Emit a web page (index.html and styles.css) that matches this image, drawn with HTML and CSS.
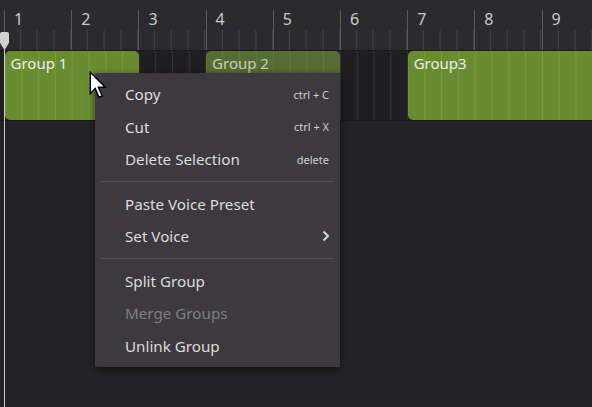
FILE: index.html
```html
<!DOCTYPE html>
<html lang="en">
<head>
  <meta charset="UTF-8" />
  <title>Arrangement - Context Menu</title>
  <link rel="stylesheet" href="styles.css">
</head>
<body>
  <div class="editor">
    <!-- bar ruler -->
    <div class="ruler">
      <div class="bar"><span>1</span></div>
      <div class="bar"><span>2</span></div>
      <div class="bar"><span>3</span></div>
      <div class="bar"><span>4</span></div>
      <div class="bar"><span>5</span></div>
      <div class="bar"><span>6</span></div>
      <div class="bar"><span>7</span></div>
      <div class="bar"><span>8</span></div>
      <div class="bar"><span>9</span></div>
    </div>

    <!-- track lane, one grid column per beat -->
    <div class="lane">
      <div class="group group-1">Group 1</div>
      <div class="group group-2 dim">Group 2</div>
      <div class="group group-3">Group3</div>
    </div>

    <div class="playhead">
      <div class="playhead-pin"></div>
    </div>

    <div class="context-menu">
      <div class="menu-item"><span>Copy</span><span class="shortcut">ctrl + C</span></div>
      <div class="menu-item"><span>Cut</span><span class="shortcut">ctrl + X</span></div>
      <div class="menu-item"><span>Delete Selection</span><span class="shortcut">delete</span></div>
      <div class="separator"></div>
      <div class="menu-item"><span>Paste Voice Preset</span></div>
      <div class="menu-item">
        <span>Set Voice</span>
        <svg class="chevron" width="8" height="12" viewBox="0 0 8 12"><path d="M1.5 1.5 L6 6 L1.5 10.5" fill="none" stroke="#d6d6d6" stroke-width="2"/></svg>
      </div>
      <div class="separator"></div>
      <div class="menu-item"><span>Split Group</span></div>
      <div class="menu-item disabled"><span>Merge Groups</span></div>
      <div class="menu-item"><span>Unlink Group</span></div>
    </div>

    <svg class="cursor" width="20" height="30" viewBox="0 0 16 24">
      <path d="M1 1 L1 18 L5 14 L8 21 L10.5 20 L7.5 13 L13 13 Z" fill="#ffffff" stroke="#000000" stroke-width="1.1" stroke-linejoin="miter"/>
    </svg>
  </div>
</body>
</html>
```

FILE: styles.css
```css
body {
  margin: 0;
  background: #232325;
  font-family: 'Noto Sans', 'Open Sans', sans-serif;
  color: #dadada;
}
.editor {
  position: relative;
  width: 592px;
  height: 407px;
  overflow: hidden;
  background: #232325;
}
.ruler {
  display: flex;
  height: 50px;
  padding-left: 4px;
  background: #2b2a2d;
  border-bottom: 1px solid #1a1a1b;
}
.bar {
  flex: 0 0 67.2px;
  box-sizing: border-box;
  padding: 9px 0 0 10px;
  font-size: 16px;
  line-height: 20px;
  color: #c9c9c9;
  background:
    linear-gradient(#5a595c, #5a595c) 0 10px / 1px 40px no-repeat,
    linear-gradient(90deg, transparent 16.3px, #454447 16.3px, #454447 17.3px, transparent 17.3px) 0 30px / 16.8px 20px repeat-x;
}
.lane {
  display: grid;
  grid-template-columns: repeat(40, 16.8px);
  height: 69px;
  padding-left: 4.5px;
  background-color: #1f1f21;
  background-image: linear-gradient(90deg, #363538 1px, transparent 1px);
  background-size: 16.8px 100%;
  background-position: 4px 0;
  border-bottom: 1px solid #19191a;
}
.group {
  grid-row: 1;
  box-sizing: border-box;
  padding: 2px 0 0 6px;
  border-radius: 5px;
  font-size: 15px;
  line-height: 20px;
  color: #ececec;
  background-color: #688d31;
  background-image: linear-gradient(90deg, #769845 1px, transparent 1px);
  background-size: 16.8px 100%;
  background-position: -0.5px 0;
}
.group.dim {
  background-color: #566d33;
  background-image: linear-gradient(90deg, #62783f 1px, transparent 1px);
  color: #c9d0bf;
}
.group-1 { grid-column: 1 / 9; }
.group-2 { grid-column: 13 / 21; }
.group-3 { grid-column: 25 / 41; }
.playhead {
  position: absolute;
  left: 4px;
  top: 32px;
  bottom: 0;
  width: 1px;
  background: #cfcfcf;
}
.playhead-pin {
  position: absolute;
  left: -4px;
  top: 0;
  width: 9px;
  height: 18px;
  background: #d2d2d2;
  border-radius: 2px 2px 0 0;
  clip-path: polygon(0 0, 100% 0, 100% 60%, 50% 100%, 0 60%);
}
.context-menu {
  position: absolute;
  left: 95px;
  top: 73px;
  width: 245px;
  box-sizing: border-box;
  padding: 5px 0 5px;
  background: #3c3a3e;
  box-shadow: 0 2px 8px rgba(0, 0, 0, 0.55);
}
.menu-item {
  display: flex;
  align-items: center;
  justify-content: space-between;
  height: 32.5px;
  padding: 0 11px 0 30px;
  font-size: 15.2px;
  color: #dcdcdc;
}
.menu-item.disabled {
  color: #7f7e81;
}
.shortcut {
  font-size: 11px;
  color: #cfcfcf;
}
.chevron {
  margin-right: -1px;
}
.separator {
  height: 1px;
  margin: 5px 6px 6px;
  background: #525054;
}
.cursor {
  position: absolute;
  left: 89px;
  top: 71px;
}
```
